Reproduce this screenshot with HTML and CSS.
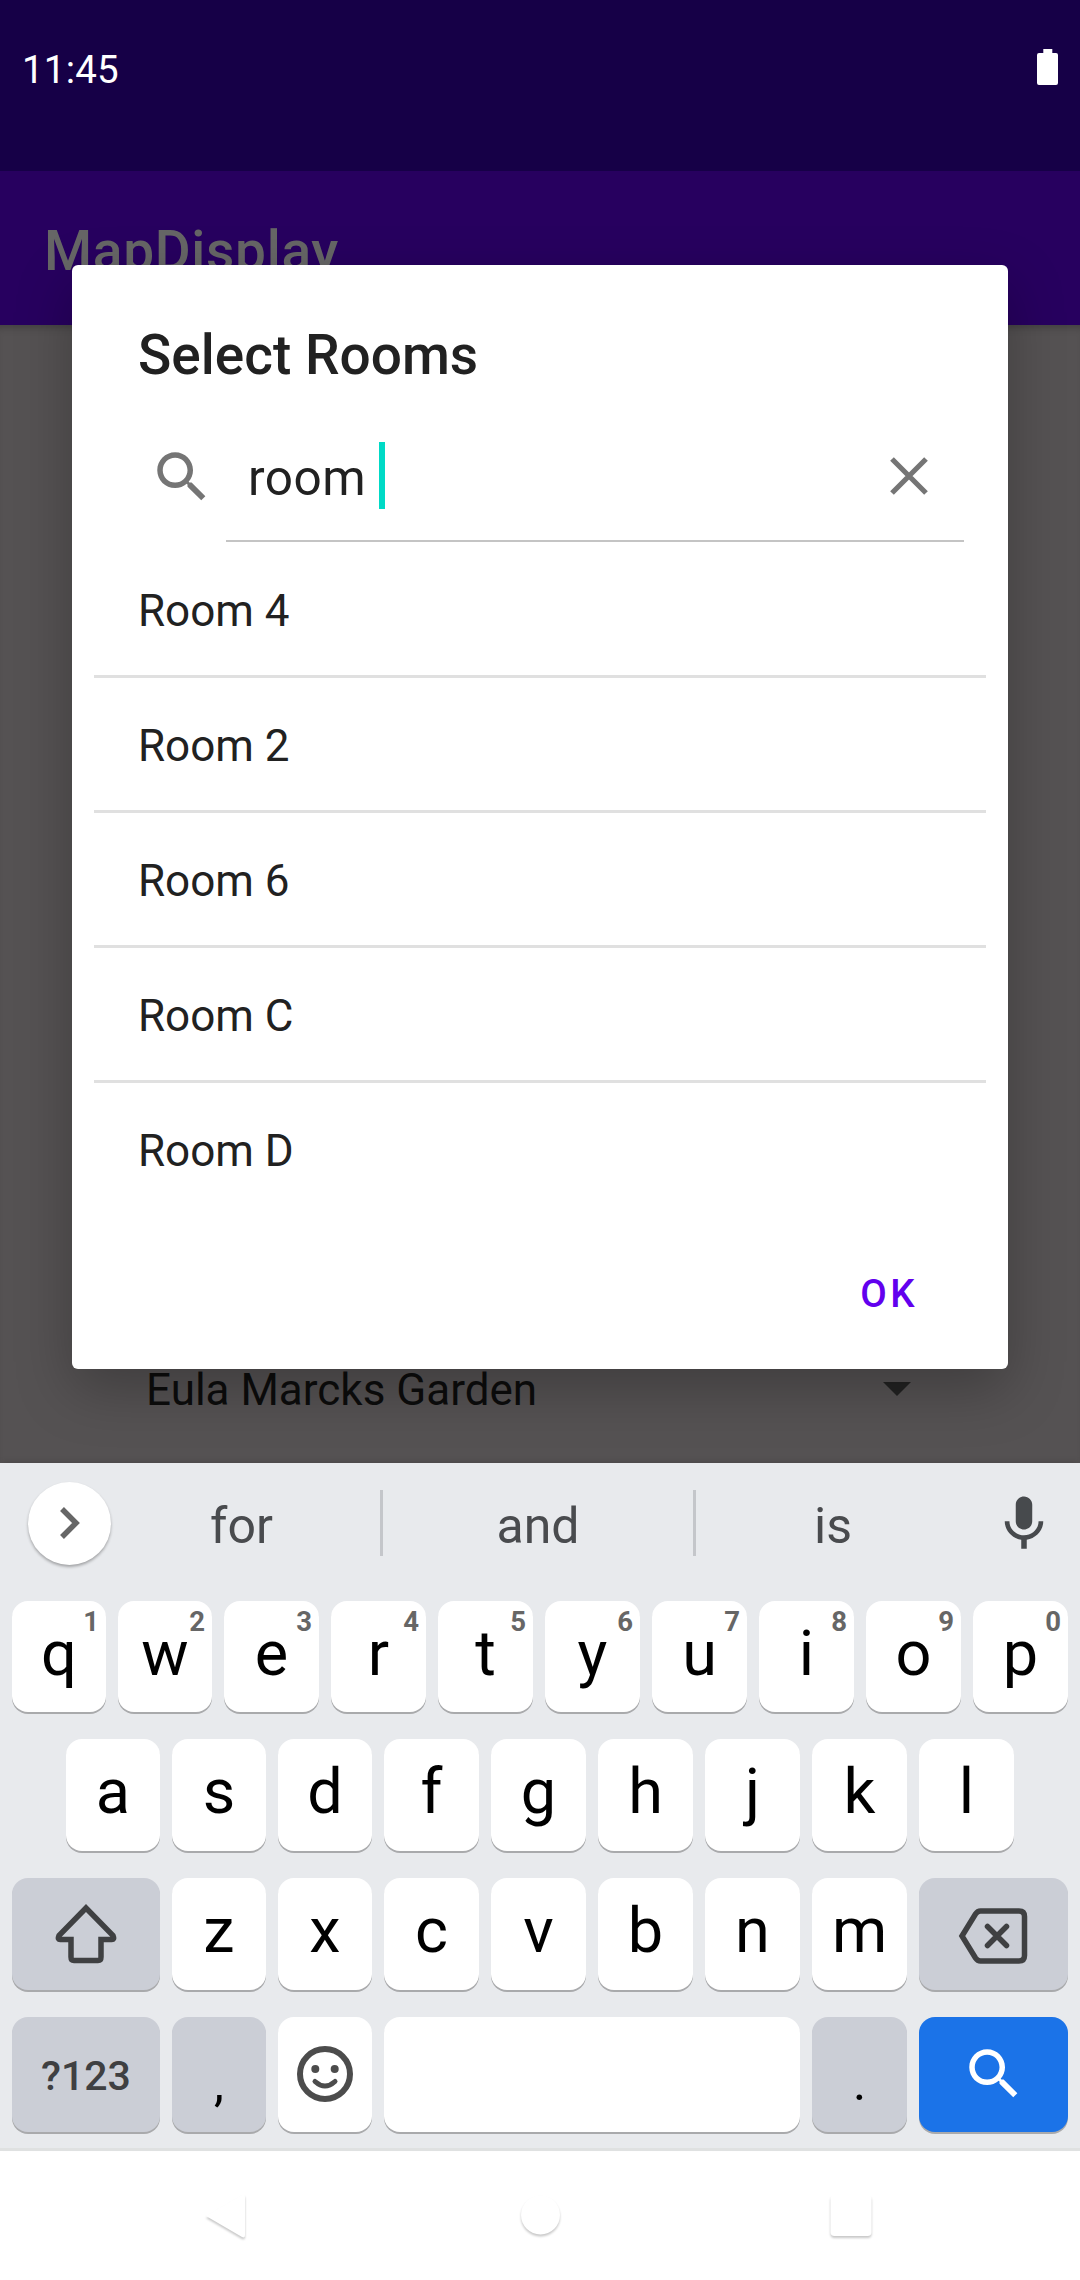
FILE: index.html
```html
<!DOCTYPE html>
<html lang="en">
<head>
<meta charset="utf-8">
<title>MapDisplay</title>
<link rel="stylesheet" href="styles.css">
</head>
<body>
<div class="phone">
  <header class="status">
    <span class="clock">11:45</span>
    <svg class="battery" viewBox="0 0 21 36"><path d="M6.3 0h9v4H19a2 2 0 0 1 2 2v28a2 2 0 0 1-2 2H2a2 2 0 0 1-2-2V6a2 2 0 0 1 2-2h4.3z"/></svg>
  </header>
  <div class="appbar">MapDisplay</div>
  <main class="page">
    <div class="spinner">
      <span>Eula Marcks Garden</span>
      <svg class="caret-down" viewBox="0 0 28 14"><path d="M0 0h28L14 14z"/></svg>
    </div>
  </main>

  <section class="keyboard">
    <div class="suggestions">
      <button class="expand"><svg viewBox="0 0 20 32"><path d="M2 2l14 14L2 30"/></svg></button>
      <span class="word">for</span>
      <i class="bar"></i>
      <span class="word">and</span>
      <i class="bar"></i>
      <span class="word">is</span>
      <svg class="mic" viewBox="0 0 24 24"><path d="M12 14c1.66 0 2.99-1.34 2.99-3L15 5c0-1.66-1.34-3-3-3S9 3.34 9 5v6c0 1.66 1.34 3 3 3zm5.3-3c0 3-2.54 5.1-5.3 5.1S6.7 14 6.7 11H5c0 3.41 2.72 6.23 6 6.72V21h2v-3.28c3.28-.48 6-3.3 6-6.72h-1.7z"/></svg>
    </div>
    <div class="keys keys-first">
      <div class="key narrow">q<sup>1</sup></div><div class="key narrow">w<sup>2</sup></div><div class="key">e<sup>3</sup></div><div class="key">r<sup>4</sup></div><div class="key">t<sup>5</sup></div><div class="key">y<sup>6</sup></div><div class="key">u<sup>7</sup></div><div class="key">i<sup>8</sup></div><div class="key">o<sup>9</sup></div><div class="key">p<sup>0</sup></div>
    </div>
    <div class="keys">
      <div class="key narrow">a</div><div class="key narrow">s</div><div class="key narrow">d</div><div class="key">f</div><div class="key">g</div><div class="key">h</div><div class="key">j</div><div class="key">k</div><div class="key">l</div>
    </div>
    <div class="keys">
      <div class="key side dim icon"><svg class="shift" viewBox="0 0 62 60"><path d="M31 4L4 31.5Q2 36 6 35.500H16V53Q16 56.500 19 56.500H43Q46 56.500 46 53V35.500H56Q60 36 58 31.500Z"/></svg></div>
      <div class="key narrow">z</div><div class="key narrow">x</div><div class="key">c</div><div class="key">v</div><div class="key">b</div><div class="key">n</div><div class="key">m</div>
      <div class="key wide dim icon"><svg class="delete" viewBox="0 0 70 56"><path d="M4 28L17.500 6Q19.500 3 22.500 3H61Q66.500 3 66.500 8.500V47.500Q66.500 53 61 53H22.500Q19.500 53 17.500 50ZM29.500 18.500l19 19m0-19l-19 19"/></svg></div>
    </div>
    <div class="keys keys-last">
      <div class="key side dim symbols">?123</div>
      <div class="key narrow dim mark">,</div>
      <div class="key narrow icon"><svg class="smile" viewBox="0 0 56 56"><circle class="line" cx="28" cy="28" r="25"/><circle cx="18.300" cy="23" r="4"/><circle cx="37.700" cy="23" r="4"/><path class="line mouth" d="M18 35.500Q28 44.500 38 35.500"/></svg></div>
      <div class="key space"></div>
      <div class="key dim mark">.</div>
      <div class="key wide go icon"><svg class="go-icon" viewBox="0 0 24 24"><path d="M15.500 14h-.79l-.28-.27C15.410 12.590 16 11.110 16 9.500 16 5.910 13.090 3 9.500 3S3 5.910 3 9.500 5.910 16 9.500 16c1.610 0 3.090-.59 4.230-1.570l.27.28v.79l5 4.990L20.490 19l-4.990-5zm-6 0C7.010 14 5 11.990 5 9.500S7.010 5 9.500 5 14 7.010 14 9.500 11.990 14 9.500 14z"/></svg></div>
    </div>
  </section>

  <nav class="navbar">
    <svg viewBox="0 0 60 60"><path d="M10 30L46 9Q49 7.500 49 11V49Q49 52.500 46 51Z"/></svg>
    <svg viewBox="0 0 60 60"><circle cx="31.500" cy="29" r="19.500"/></svg>
    <svg viewBox="0 0 60 60"><rect x="9.500" y="9" width="41" height="41" rx="4"/></svg>
  </nav>

  <div class="dialog">
    <h1 class="dialog-title">Select Rooms</h1>
    <div class="search">
      <svg class="search-icon" viewBox="0 0 24 24"><path d="M15.500 14h-.79l-.28-.27C15.410 12.590 16 11.110 16 9.500 16 5.910 13.090 3 9.500 3S3 5.910 3 9.500 5.910 16 9.500 16c1.610 0 3.090-.59 4.230-1.570l.27.28v.79l5 4.990L20.490 19l-4.990-5zm-6 0C7.010 14 5 11.990 5 9.500S7.010 5 9.500 5 14 7.010 14 9.500 11.990 14 9.500 14z"/></svg>
      <div class="field">
        <span class="query">room </span>
        <i class="cursor"></i>
        <svg class="clear" viewBox="0 0 38 38"><path d="M2 2l34 34M36 2L2 36"/></svg>
      </div>
    </div>
    <ul class="rooms">
      <li>Room 4</li>
      <li>Room 2</li>
      <li>Room 6</li>
      <li>Room C</li>
      <li>Room D</li>
    </ul>
    <div class="actions"><button class="ok">OK</button></div>
  </div>
</div>
</body>
</html>
```
FILE: styles.css
```css
* { box-sizing: border-box; }
body { margin: 0; font-family: Roboto, sans-serif; }
button { border: 0; padding: 0; background: none; font: inherit; }
svg { display: block; flex: none; }

.phone {
  position: relative;
  width: 1080px;
  height: 2280px;
  display: flex;
  flex-direction: column;
  overflow: hidden;
  background: #fff;
}

/* Window behind the dialog */
.status {
  height: 171px;
  padding: 0 22px;
  display: flex;
  justify-content: space-between;
  background: #160047;
  color: #fff;
}
.clock { font-size: 38.5px; line-height: 140px; letter-spacing: .2px; }
.battery { width: 21px; height: 36px; margin-top: 49px; fill: #fff; }
.appbar {
  height: 154px;
  padding-left: 44px;
  background: #27005f;
  color: #666;
  font-size: 55px;
  font-weight: 500;
  line-height: 160px;
  letter-spacing: .7px;
}
.page {
  height: 1138px;
  padding: 0 169px 43px 146px;
  display: flex;
  flex-direction: column;
  justify-content: flex-end;
  background: #555253;
  box-shadow: inset 0 8px 8px -6px rgba(0, 0, 0, .25);
}
.spinner {
  display: flex;
  align-items: center;
  justify-content: space-between;
  color: #0c0c0c;
  font-size: 44px;
  line-height: 60px;
}
.caret-down { width: 28px; height: 14px; margin-bottom: 2px; fill: #222; }

/* Keyboard */
.keyboard {
  height: 688px;
  padding: 0 12px;
  border-bottom: 3px solid #dfe1e1;
  background: #e8eaed;
  z-index: 2;
  box-shadow: 0 -3px 6px -2px rgba(0, 0, 0, .15);
}
.suggestions {
  display: grid;
  grid-template-columns: 103px 277px 3px 310px 3px 274px 108px;
  align-items: center;
  justify-items: center;
  height: 120px;
  margin: 0 -12px 18px;
  color: #494b4e;
}
.expand {
  display: flex;
  justify-self: start;
  align-items: center;
  justify-content: center;
  width: 83px;
  height: 83px;
  margin-left: 28px;
  border-radius: 50%;
  background: #fff;
  box-shadow: 0 2px 3px rgba(0, 0, 0, .3);
}
.expand svg { width: 20px; height: 32px; fill: none; stroke: #666; stroke-width: 5.5px; }
.word { padding-top: 6px; font-size: 50px; line-height: 60px; }
.bar { width: 3px; height: 66px; background: #c4c6ca; }
.mic { width: 66px; height: 66px; margin-top: 2px; fill: #474a4d; }

.keys {
  display: flex;
  justify-content: center;
  gap: 12px;
  height: 112px;
  margin-bottom: 27px;
}
.keys-first { height: 111px; }
.keys-last { height: 115px; }
.key {
  position: relative;
  width: 95px;
  border-radius: 16px;
  background: #fff;
  box-shadow: 0 2px 0 #a9aaac;
  color: #000;
  font-size: 63px;
  line-height: 105px;
  text-align: center;
}
.key sup {
  position: absolute;
  top: 5px;
  right: 7px;
  color: #666;
  font-size: 27.5px;
  font-weight: 700;
  line-height: 32px;
}
.narrow { width: 94px; }
.side { width: 148px; }
.wide { width: 149px; }
.space { width: 416px; }
.dim { background: #cbced6; }
.go { background: #1b73e8; }
.icon { display: flex; align-items: center; justify-content: center; }
.symbols { color: #3f4042; font-size: 41px; font-weight: 500; line-height: 118px; }
.mark { font-size: 50px; line-height: 132px; }
.shift { width: 62px; height: 60px; fill: none; stroke: #3f4042; stroke-width: 5.5px; }
.delete { width: 70px; height: 56px; margin: 4px 0 0 -1px; fill: none; stroke: #3f4042; stroke-width: 5.5px; stroke-linecap: round; }
.smile { width: 56px; height: 56px; margin-bottom: 1px; fill: #4c4c4c; }
.smile .line { fill: none; stroke: #4c4c4c; stroke-width: 6px; }
.smile .mouth { stroke-width: 5px; stroke-linecap: round; }
.go-icon { width: 66px; height: 66px; margin-bottom: 2px; fill: #fff; }

/* System navigation */
.navbar {
  display: flex;
  align-items: center;
  justify-content: space-between;
  height: 129px;
  padding: 0 199px 0 196px;
  background: #fff;
}
.navbar svg { width: 60px; height: 60px; fill: #fff; filter: drop-shadow(0 2.5px 1px rgba(0, 0, 0, .22)); }

/* Dialog */
.dialog {
  position: absolute;
  top: 265px;
  left: 72px;
  width: 936px;
  height: 1104px;
  border-radius: 6px;
  background: #fff;
  color: #212121;
  box-shadow: 0 20px 56px rgba(0, 0, 0, .26);
  z-index: 1;
}
.dialog-title {
  margin: 0;
  padding: 58px 66px 22px;
  font-size: 55px;
  font-weight: 500;
  line-height: 64px;
}
.search { display: flex; height: 134px; padding: 0 44px 0 77px; }
.search-icon { width: 66px; height: 66px; margin-top: 35px; fill: #757575; }
.field {
  flex: 1;
  display: flex;
  align-items: center;
  height: 133px;
  margin-left: 11px;
  padding: 2px 36px 0 22px;
  border-bottom: 2px solid #c4c4c4;
}
.query { padding-top: 5px; font-size: 49.5px; line-height: 60px; letter-spacing: .46px; white-space: pre; }
.cursor { width: 6px; height: 67px; background: #00dac6; }
.clear { width: 38px; height: 38px; margin-left: auto; fill: none; stroke: #757575; stroke-width: 5.2px; }
.rooms { margin: 0 22px; padding: 0; list-style: none; }
.rooms li { height: 132px; padding-left: 44px; font-size: 44px; line-height: 136px; }
.rooms li + li { height: 135px; border-top: 3px solid #e0e0e0; }
.actions { display: flex; justify-content: flex-end; padding-right: 90px; }
.ok { color: #6200ee; font-size: 38.5px; font-weight: 500; line-height: 158px; letter-spacing: 3.4px; }
```
